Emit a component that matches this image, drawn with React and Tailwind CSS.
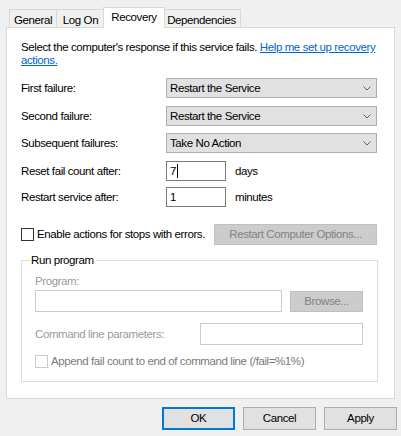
import React from "react";

const font = { fontFamily: '"Liberation Sans", Arial, sans-serif' };

function Chevron() {
  return (
    <svg width="8" height="5" viewBox="0 0 8 5" className="shrink-0">
      <path d="M0.5 0.5 L4 4 L7.5 0.5" fill="none" stroke="#606060" strokeWidth="1" />
    </svg>
  );
}

function Combo({ value }) {
  return (
    <div className="flex h-[20px] w-[211px] items-center justify-between border border-[#adadad] bg-[#e1e1e1] pl-[3px] pr-[5px] text-black">
      <span>{value}</span>
      <Chevron />
    </div>
  );
}

function Tab({ label, active, className }) {
  if (active) {
    return (
      <div
        className={`relative z-10 -mb-px flex h-[21px] items-start justify-center border border-b-0 border-[#d9d9d9] bg-white pt-[3px] ${className}`}
      >
        {label}
      </div>
    );
  }
  return (
    <div
      className={`flex h-[18px] items-start justify-center border border-b-0 border-[#d9d9d9] bg-[#f0f0f0] pt-[4px] ${className}`}
    >
      {label}
    </div>
  );
}

export default function App() {
  return (
    <div
      className="h-[436px] w-[401px] overflow-hidden bg-[#f0f0f0] text-[11.5px] leading-[13px] tracking-[-0.4px] text-black"
      style={font}
    >
      {/* tab strip */}
      <div className="flex h-[27px] items-end pl-[9px]">
        <Tab label="General" className="w-[48px]" />
        <Tab label="Log On" className="w-[48px] border-l-0" />
        <Tab label="Recovery" active className="-mx-[2px] w-[62px]" />
        <Tab label="Dependencies" className="w-[78px] border-l-0" />
      </div>

      {/* page */}
      <div className="mx-[6px] flex h-[372px] flex-col border border-[#d9d9d9] bg-white pl-[14px] pt-[13px]">
        <p className="whitespace-nowrap">
          Select the computer's response if this service fails.{" "}
          <span className="text-[#0066cc] underline">Help me set up recovery</span>
          <br />
          <span className="text-[#0066cc] underline">actions.</span>
        </p>

        <div className="mt-[11px] flex items-center">
          <span className="w-[145px]">First failure:</span>
          <Combo value="Restart the Service" />
        </div>
        <div className="mt-[8px] flex items-center">
          <span className="w-[145px]">Second failure:</span>
          <Combo value="Restart the Service" />
        </div>
        <div className="mt-[7px] flex items-center">
          <span className="w-[145px]">Subsequent failures:</span>
          <Combo value="Take No Action" />
        </div>

        <div className="mt-[8px] flex items-center">
          <span className="w-[145px]">Reset fail count after:</span>
          <div className="flex h-[20px] w-[60px] items-center border border-[#7a7a7a] bg-white pl-[3px]">
            <span>7</span>
            <span className="ml-[1px] h-[14px] w-px bg-black" />
          </div>
          <span className="ml-[9px]">days</span>
        </div>
        <div className="mt-[6px] flex items-center">
          <span className="w-[145px]">Restart service after:</span>
          <div className="flex h-[20px] w-[60px] items-center border border-[#7a7a7a] bg-white pl-[3px]">
            <span>1</span>
          </div>
          <span className="ml-[9px]">minutes</span>
        </div>

        <div className="mt-[17px] flex items-center">
          <span className="h-[13px] w-[13px] border border-[#333333] bg-white" />
          <span className="ml-[3px] w-[177px] whitespace-nowrap">Enable actions for stops with errors.</span>
          <div className="flex h-[21px] w-[163px] items-center justify-center border border-[#bfbfbf] bg-[#cccccc] text-[#838383]">
            Restart Computer Options...
          </div>
        </div>

        {/* run program group */}
        <div className="relative mt-[15px] h-[122px] w-[357px] border border-[#dcdcdc] pl-[13px] pt-[14px]">
          <span className="absolute -top-[7px] left-[8px] bg-white px-[1px] text-black">Run program</span>
          <div className="text-[#9a9a9a]">Program:</div>
          <div className="mt-[2px] flex items-start">
            <div className="h-[22px] w-[247px] border border-[#cccccc] bg-white" />
            <div className="ml-[8px] mt-[1px] flex h-[21px] w-[73px] items-center justify-center border border-[#bfbfbf] bg-[#cccccc] text-[#838383]">
              Browse...
            </div>
          </div>
          <div className="mt-[11px] flex items-center">
            <span className="w-[165px] text-[#9a9a9a]">Command line parameters:</span>
            <div className="h-[22px] w-[163px] border border-[#cccccc] bg-white" />
          </div>
          <div className="mt-[10px] flex items-center">
            <span className="h-[13px] w-[13px] border border-[#cccccc] bg-white" />
            <span className="ml-[3px] whitespace-nowrap text-[#7a7a7a]">
              Append fail count to end of command line (/fail=%1%)
            </span>
          </div>
        </div>
      </div>

      {/* dialog buttons */}
      <div className="mt-[8px] flex justify-end gap-[8px] pr-[4px]">
        <div className="flex h-[23px] w-[73px] items-center justify-center border-2 border-[#0078d7] bg-[#e1e1e1]">
          OK
        </div>
        <div className="flex h-[23px] w-[73px] items-center justify-center border border-[#adadad] bg-[#e1e1e1]">
          Cancel
        </div>
        <div className="flex h-[23px] w-[73px] items-center justify-center border border-[#adadad] bg-[#e1e1e1]">
          Apply
        </div>
      </div>
    </div>
  );
}
